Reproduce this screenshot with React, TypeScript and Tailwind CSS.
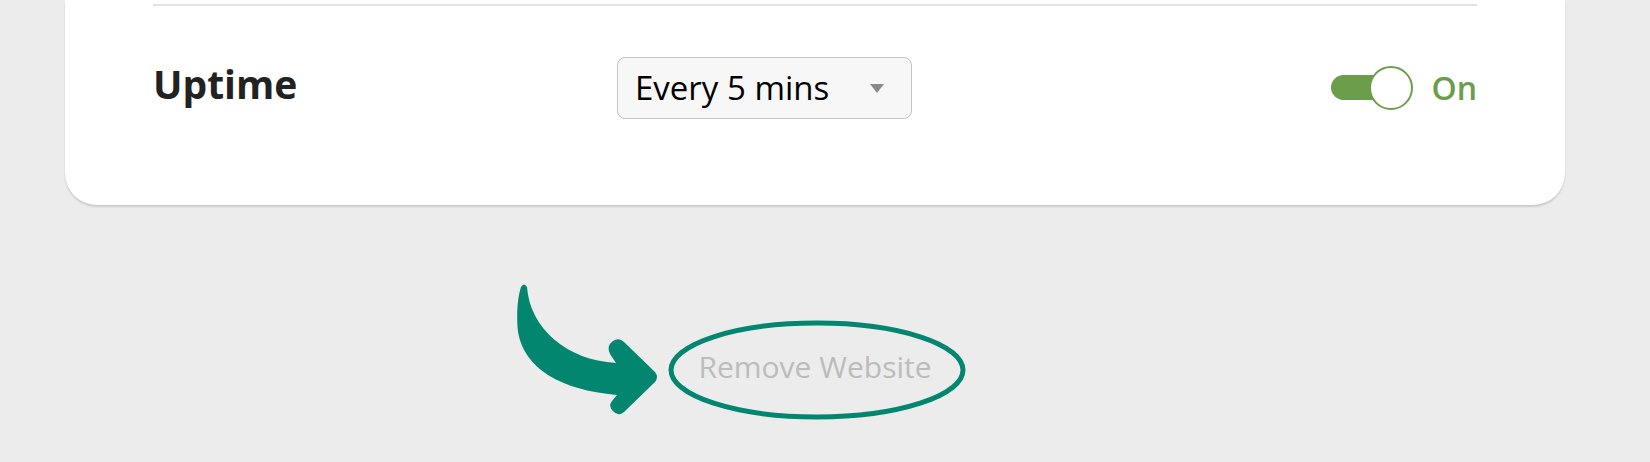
import React, { useState } from "react";

const FONT = { fontFamily: '"Open Sans", "Noto Sans", sans-serif' };

function CurvedArrow({ className }: { className?: string }) {
  return (
    <svg className={className} width="160" height="140" viewBox="0 0 160 140" fill="none">
      <path
        d="M 11 7 Q 14 2 17 7 C 20 48 56 80 106 83 L 100 74 Q 96 66 103 61 Q 109 57 114 62 L 145 92 Q 149 97 145 102 L 114 132 Q 108 137 103 131 Q 98 126 102 121 L 107 115 C 50 110 14 88 8 52 C 6 32 8 16 11 7 Z"
        fill="#02866f"
      />
    </svg>
  );
}

function Toggle() {
  return (
    <div className="relative w-[82px] h-[44px]">
      <div className="absolute left-0 top-[9px] w-[64px] h-[25px] rounded-full bg-[#6c9d4b]" />
      <div className="absolute right-0 top-0 w-[44px] h-[44px] rounded-full border-2 border-[#6c9d4b] bg-white" />
    </div>
  );
}

export default function App() {
  const [interval] = useState("Every 5 mins");

  return (
    <div className="w-[1650px] h-[462px] bg-[#ececec] overflow-hidden" style={FONT}>
      <div className="ml-[65px] w-[1500px] bg-white rounded-b-[32px] shadow-[0_2px_2px_rgba(0,0,0,0.14)] px-[88px] pb-[35px]">
        <div className="h-[4px]" />
        <div className="h-[2px] bg-[#e3e3e3]" />
        <div className="flex items-center h-[164px]">
          <div className="w-[464px] pb-[7px] text-[39px] font-bold text-[#222222]">Uptime</div>
          <div className="w-[295px] h-[62px] flex items-center justify-between border border-[#c4c4c4] rounded-[8px] bg-[#f7f7f7] pl-[17px] pr-[27px]">
            <span className="text-[33px] text-black">{interval}</span>
            <span className="w-0 h-0 border-l-[7px] border-r-[7px] border-t-[9px] border-l-transparent border-r-transparent border-t-[#8a8a8a]" />
          </div>
          <div className="ml-auto flex items-center gap-[18px]">
            <Toggle />
            <span className="text-[32px] font-semibold text-[#6b9e4c]">On</span>
          </div>
        </div>
      </div>

      <div className="flex justify-center w-[1630px] mt-[142px]">
        <div className="relative">
          <CurvedArrow className="absolute left-[-188px] top-[-67px]" />
          <svg
            className="absolute left-1/2 -translate-x-1/2 ml-[2px] top-[-27px]"
            width="298"
            height="100"
            viewBox="0 0 298 100"
            fill="none"
          >
            <ellipse cx="149" cy="50" rx="146" ry="47" stroke="#02866f" strokeWidth="5" />
          </svg>
          <button className="relative text-[30px] leading-[40px] text-[#bcbcbc]">Remove Website</button>
        </div>
      </div>
    </div>
  );
}
